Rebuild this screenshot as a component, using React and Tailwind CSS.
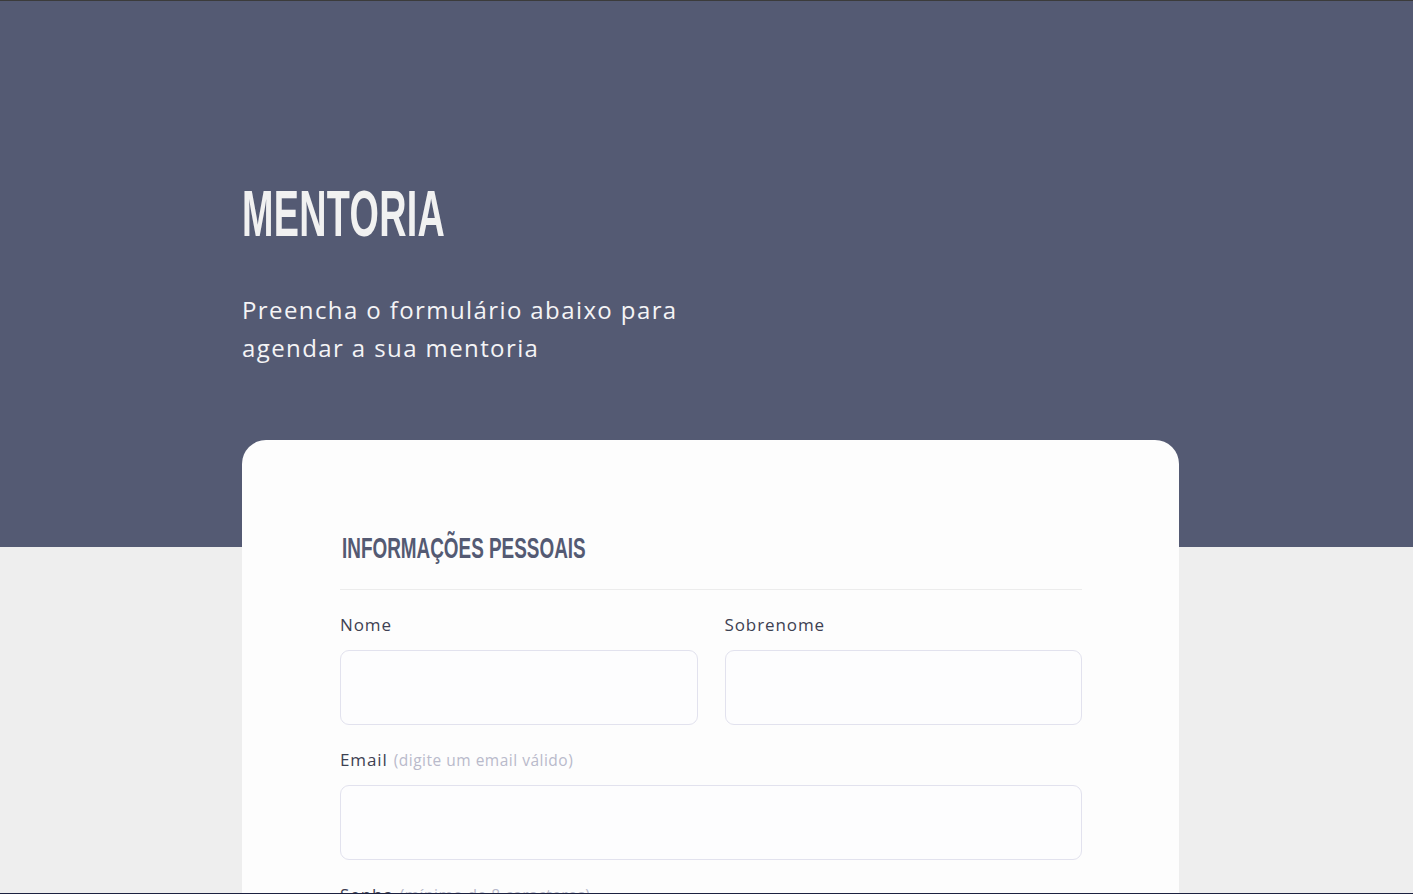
import { useState } from "react";

const Field = ({ label, hint, className = "" }) => {
    const [value, setValue] = useState("");
    return (
        <div className={`flex flex-col ${className}`}>
            <label className="text-[17px] leading-[26px] tracking-[0.9px] text-[#3d4152]">
                {label}
                {hint && <span className="ml-1.5 text-[15.5px] tracking-[0.5px] text-[#b9bacb]">{hint}</span>}
            </label>
            <input
                value={value}
                onChange={(e) => setValue(e.target.value)}
                className="mt-[12px] h-[75px] w-full rounded-[9px] border border-[#e2e2ee] bg-[#fdfdfe] px-4 outline-none"
            />
        </div>
    );
};

const App = () => {
    return (
        <div
            className="h-[894px] overflow-hidden border-t border-t-[#3b3b3b] border-b border-b-[#1c2140] bg-[#eeeeee]"
            style={{ fontFamily: '"Open Sans", "Noto Sans", sans-serif' }}
        >
            {/* Header */}
            <header className="h-[546px] bg-[#545a73]">
                <div className="ml-[242px] w-[937px] pt-[176px]">
                    <h1
                        className="origin-left scale-x-[0.59] text-[64px] leading-[74px] font-bold tracking-[0.5px] text-[#f1f1f1]"
                        style={{ fontFamily: '"Liberation Sans Narrow", "Liberation Sans", sans-serif' }}
                    >
                        MENTORIA
                    </h1>
                    <p className="mt-[40px] w-[480px] text-[24px] leading-[38px] tracking-[1.4px] text-[#f4f4f6]">
                        Preencha o formulário abaixo para agendar a sua mentoria
                    </p>
                </div>
            </header>

            {/* Card */}
            <main className="-mt-[107px] ml-[242px]">
                <div className="w-[937px] rounded-t-[24px] bg-[#fdfdfd] pl-[98px] pr-[97px] pt-[88px] pb-20">
                    <h2
                        className="ml-[2px] origin-left scale-x-[0.63] text-[30px] leading-[40px] font-bold text-[#545a73]"
                        style={{ fontFamily: '"Liberation Sans Narrow", "Liberation Sans", sans-serif' }}
                    >
                        INFORMAÇÕES PESSOAIS
                    </h2>
                    <div className="mt-[21px] h-px bg-[#ececec]" />

                    <div className="mt-[22px] grid grid-cols-2 gap-x-[27px]">
                        <Field label="Nome" />
                        <Field label="Sobrenome" />
                    </div>
                    <Field className="mt-[22px]" label="Email" hint="(digite um email válido)" />
                    <Field className="mt-[22px]" label="Senha" hint="(mínimo de 8 caracteres)" />
                </div>
            </main>
        </div>
    );
};

export default App;
